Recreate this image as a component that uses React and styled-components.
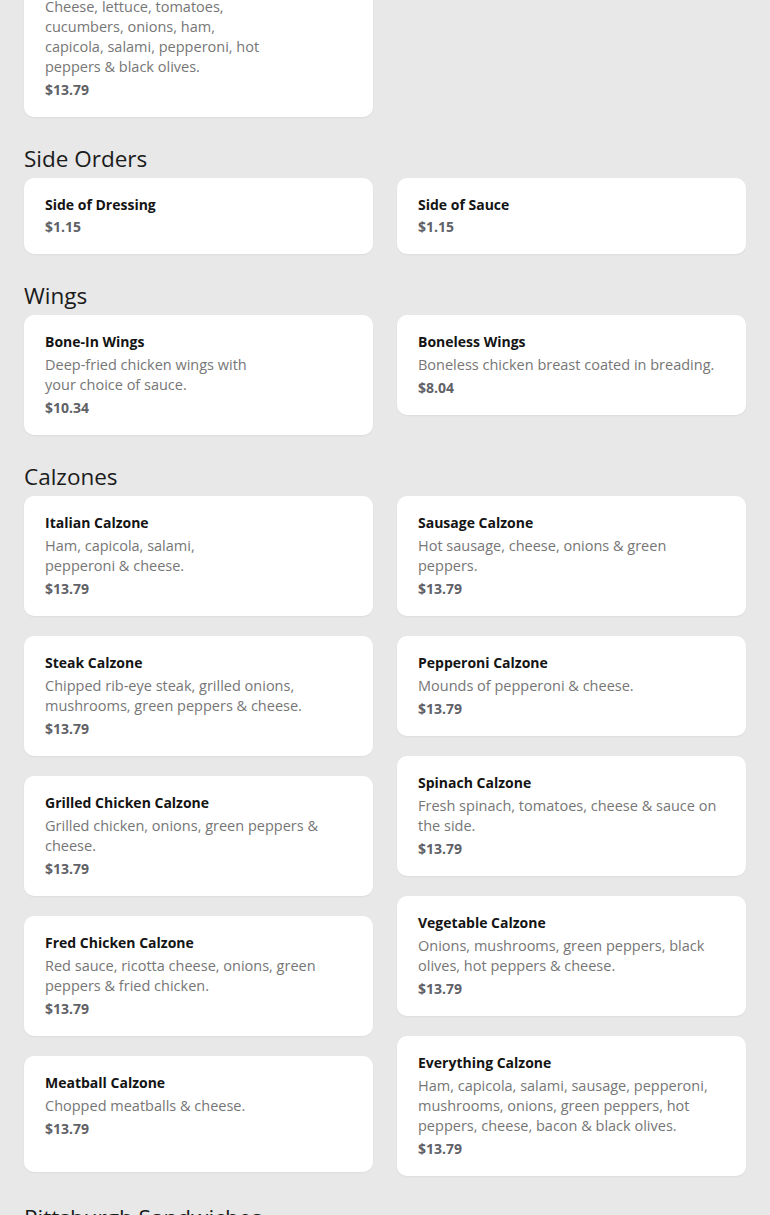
import React from "react";
import styled, { createGlobalStyle } from "styled-components";

const GlobalStyle = createGlobalStyle`
  html, body {
    margin: 0;
    padding: 0;
    background: #e8e8e8;
    font-family: "Open Sans", "Liberation Sans", sans-serif;
  }
`;

const sections = [
  {
    title: null,
    left: [
      {
        name: "Antipasto Salad",
        desc: "Cheese, lettuce, tomatoes, cucumbers, onions, ham, capicola, salami, pepperoni, hot peppers & black olives.",
        price: "$13.79",
        narrow: true
      }
    ],
    right: []
  },
  {
    title: "Side Orders",
    left: [{ name: "Side of Dressing", price: "$1.15" }],
    right: [{ name: "Side of Sauce", price: "$1.15" }]
  },
  {
    title: "Wings",
    left: [
      {
        name: "Bone-In Wings",
        desc: "Deep-fried chicken wings with your choice of sauce.",
        price: "$10.34",
        narrow: true
      }
    ],
    right: [
      {
        name: "Boneless Wings",
        desc: "Boneless chicken breast coated in breading.",
        price: "$8.04"
      }
    ]
  },
  {
    title: "Calzones",
    left: [
      {
        name: "Italian Calzone",
        desc: "Ham, capicola, salami, pepperoni & cheese.",
        price: "$13.79",
        narrow: true
      },
      {
        name: "Steak Calzone",
        desc: "Chipped rib-eye steak, grilled onions, mushrooms, green peppers & cheese.",
        price: "$13.79"
      },
      {
        name: "Grilled Chicken Calzone",
        desc: "Grilled chicken, onions, green peppers & cheese.",
        price: "$13.79"
      },
      {
        name: "Fred Chicken Calzone",
        desc: "Red sauce, ricotta cheese, onions, green peppers & fried chicken.",
        price: "$13.79"
      },
      {
        name: "Meatball Calzone",
        desc: "Chopped meatballs & cheese.",
        price: "$13.79",
        minHeight: 116
      }
    ],
    right: [
      {
        name: "Sausage Calzone",
        desc: "Hot sausage, cheese, onions & green peppers.",
        price: "$13.79"
      },
      {
        name: "Pepperoni Calzone",
        desc: "Mounds of pepperoni & cheese.",
        price: "$13.79"
      },
      {
        name: "Spinach Calzone",
        desc: "Fresh spinach, tomatoes, cheese & sauce on the side.",
        price: "$13.79"
      },
      {
        name: "Vegetable Calzone",
        desc: "Onions, mushrooms, green peppers, black olives, hot peppers & cheese.",
        price: "$13.79"
      },
      {
        name: "Everything Calzone",
        desc: "Ham, capicola, salami, sausage, pepperoni, mushrooms, onions, green peppers, hot peppers, cheese, bacon & black olives.",
        price: "$13.79"
      }
    ]
  },
  {
    title: "Pittsburgh Sandwiches",
    left: [],
    right: []
  }
];

const Page = styled.main`
  padding: 0 24px 40px;
  margin-top: -43px;
`;

const Section = styled.section`
  & + & {
    margin-top: 27px;
  }
`;

const SectionTitle = styled.h2`
  margin: 0 0 4px;
  font-size: 22.5px;
  line-height: 30px;
  font-weight: 400;
  color: #1b1b1b;
`;

const Columns = styled.div`
  display: grid;
  grid-template-columns: 1fr 1fr;
  column-gap: 24px;
  align-items: start;
`;

const Column = styled.div`
  display: flex;
  flex-direction: column;
  gap: 20px;
`;

const Card = styled.article`
  background: #fff;
  border-radius: 10px;
  padding: 17px 21px;
  box-shadow: 0 1px 2px rgba(0, 0, 0, 0.05);
  display: flex;
  flex-direction: column;
  gap: 2px;
  min-height: ${props => (props.minHeight ? `${props.minHeight}px` : "auto")};
  box-sizing: border-box;
`;

const ItemName = styled.h3`
  margin: 0;
  font-size: 14px;
  line-height: 20px;
  font-weight: 700;
  color: #141414;
`;

const ItemDesc = styled.p`
  margin: 1px 0;
  font-size: 14.5px;
  line-height: 20px;
  color: #767676;
  max-width: ${props => (props.narrow ? "220px" : "none")};
`;

const ItemPrice = styled.span`
  font-size: 14px;
  line-height: 20px;
  font-weight: 700;
  color: #5f6166;
`;

const MenuItem = ({ item }) => (
  <Card minHeight={item.minHeight}>
    <ItemName>{item.name}</ItemName>
    {item.desc && <ItemDesc narrow={item.narrow}>{item.desc}</ItemDesc>}
    <ItemPrice>{item.price}</ItemPrice>
  </Card>
);

export default function App() {
  return (
    <>
      <GlobalStyle />
      <Page>
        {sections.map((section, i) => (
          <Section key={i}>
            {section.title && <SectionTitle>{section.title}</SectionTitle>}
            {(section.left.length > 0 || section.right.length > 0) && (
              <Columns>
                <Column>
                  {section.left.map(item => (
                    <MenuItem key={item.name} item={item} />
                  ))}
                </Column>
                <Column>
                  {section.right.map(item => (
                    <MenuItem key={item.name} item={item} />
                  ))}
                </Column>
              </Columns>
            )}
          </Section>
        ))}
      </Page>
    </>
  );
}
